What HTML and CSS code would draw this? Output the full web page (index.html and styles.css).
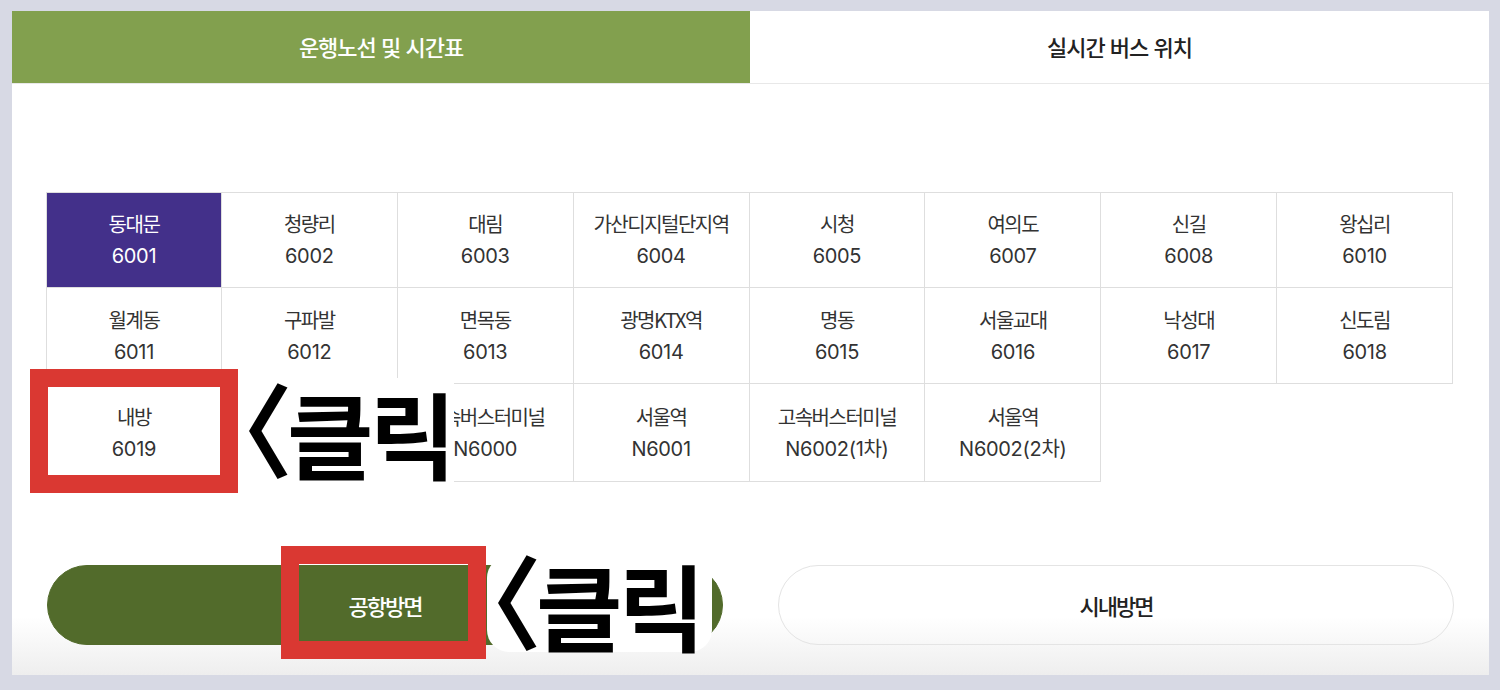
FILE: index.html
```html
<!DOCTYPE html>
<html lang="ko">
<head>
<meta charset="utf-8">
<title>운행노선 및 시간표</title>
<link rel="stylesheet" href="styles.css">
</head>
<body>
<div class="panel">
  <div class="tabs">
    <div class="tab active">운행노선 및 시간표</div>
    <div class="tab">실시간 버스 위치</div>
  </div>
  <div class="content">
    <div class="routes">
      <div class="cell on"><span class="nm">동대문</span><span class="no">6001</span></div>
      <div class="cell"><span class="nm">청량리</span><span class="no">6002</span></div>
      <div class="cell"><span class="nm">대림</span><span class="no">6003</span></div>
      <div class="cell"><span class="nm">가산디지털단지역</span><span class="no">6004</span></div>
      <div class="cell"><span class="nm">시청</span><span class="no">6005</span></div>
      <div class="cell"><span class="nm">여의도</span><span class="no">6007</span></div>
      <div class="cell"><span class="nm">신길</span><span class="no">6008</span></div>
      <div class="cell"><span class="nm">왕십리</span><span class="no">6010</span></div>
      <div class="cell"><span class="nm">월계동</span><span class="no">6011</span></div>
      <div class="cell"><span class="nm">구파발</span><span class="no">6012</span></div>
      <div class="cell"><span class="nm">면목동</span><span class="no">6013</span></div>
      <div class="cell"><span class="nm">광명KTX역</span><span class="no">6014</span></div>
      <div class="cell"><span class="nm">명동</span><span class="no">6015</span></div>
      <div class="cell"><span class="nm">서울교대</span><span class="no">6016</span></div>
      <div class="cell"><span class="nm">낙성대</span><span class="no">6017</span></div>
      <div class="cell"><span class="nm">신도림</span><span class="no">6018</span></div>
      <div class="cell"><span class="nm">내방</span><span class="no">6019</span></div>
      <div class="cell"></div>
      <div class="cell"><span class="nm">고속버스터미널</span><span class="no">N6000</span></div>
      <div class="cell"><span class="nm">서울역</span><span class="no">N6001</span></div>
      <div class="cell"><span class="nm">고속버스터미널</span><span class="no">N6002(1차)</span></div>
      <div class="cell"><span class="nm">서울역</span><span class="no">N6002(2차)</span></div>
    </div>
    <div class="dirs">
      <div class="dir on">공항방면</div>
      <div class="dir">시내방면</div>
    </div>
  </div>
</div>
<div class="mark mark-a"></div>
<div class="note note-a"><span class="br">〈</span>클릭</div>
<div class="mark mark-b"></div>
<div class="note note-b"><span class="br">〈</span>클릭</div>
</body>
</html>
```

FILE: styles.css
```css
* { box-sizing: border-box; }
html, body { margin: 0; padding: 0; }
body {
  width: 1500px;
  height: 690px;
  background: #d7d9e4;
  padding: 11px 11px 0 12px;
  font-family: "Noto Sans CJK KR", "Noto Sans", sans-serif;
  position: relative;
  overflow: hidden;
}
.panel {
  width: 1477px;
  height: 664px;
  background: linear-gradient(to bottom, #ffffff 0, #ffffff 606px, #eeeeee 664px);
  display: flex;
  flex-direction: column;
}
.tabs {
  display: flex;
  height: 73px;
  border-bottom: 1px solid #e8e8e8;
}
.tab {
  flex: 1;
  display: flex;
  align-items: center;
  justify-content: center;
  font-size: 22px;
  font-weight: 500;
  letter-spacing: -1px;
  color: #222;
  padding-bottom: 3px;
}
.tab.active {
  background: #82a04e;
  color: #fff;
  flex: 0 0 738px;
}
.content {
  padding: 108px 36px 0 34px;
}
.routes {
  display: grid;
  grid-template-columns: repeat(8, 1fr);
  width: 1407px;
}
.cell {
  height: 96px;
  border-right: 1px solid #dedede;
  border-bottom: 1px solid #dedede;
  display: flex;
  flex-direction: column;
  align-items: center;
  justify-content: center;
  color: #333;
  background: #fff;
}
.cell:nth-child(-n+8) { border-top: 1px solid #dedede; }
.cell:nth-child(8n+1) { border-left: 1px solid #dedede; }
.cell:nth-child(n+17) { height: 98px; }
.cell.on { background: #43308a; color: #fff; }
.nm {
  font-size: 20px;
  letter-spacing: -1.5px;
  line-height: 33px;
}
.no {
  font-family: "Inter", "Noto Sans CJK KR", sans-serif;
  font-size: 20px;
  letter-spacing: -0.3px;
  line-height: 33px;
}
.dirs {
  display: grid;
  grid-template-columns: 676px 676px;
  column-gap: 55px;
  margin-top: 83px;
  padding-left: 1px;
}
.dir {
  height: 80px;
  border-radius: 40px;
  display: flex;
  align-items: center;
  justify-content: center;
  font-size: 22px;
  font-weight: 500;
  letter-spacing: -2px;
  color: #222;
  border: 1px solid #e4e4e4;
}
.dir.on {
  background: #526b2b;
  border-color: #526b2b;
  color: #fff;
}
.mark {
  position: absolute;
  border: 18px solid #da3832;
}
.mark-a { left: 30px; top: 369px; width: 208px; height: 124px; }
.mark-b { left: 281px; top: 546px; width: 205px; height: 113px; }
.note {
  position: absolute;
  background: #fff;
  color: #000;
  font-size: 94px;
  font-weight: 700;
  line-height: 1;
  letter-spacing: -4px;
  display: flex;
  align-items: center;
  white-space: nowrap;
}
.note .br {
  display: inline-block;
  margin-left: -41px;
  margin-right: 0;
  transform: translateY(-6px) scale(1.06, 1.08);
  transform-origin: 70% 50%;
}
.note-a { left: 238px; top: 378px; width: 216px; height: 108px; }
.note-b { left: 487px; top: 556px; width: 225px; height: 96px; border-radius: 22px; }
```
